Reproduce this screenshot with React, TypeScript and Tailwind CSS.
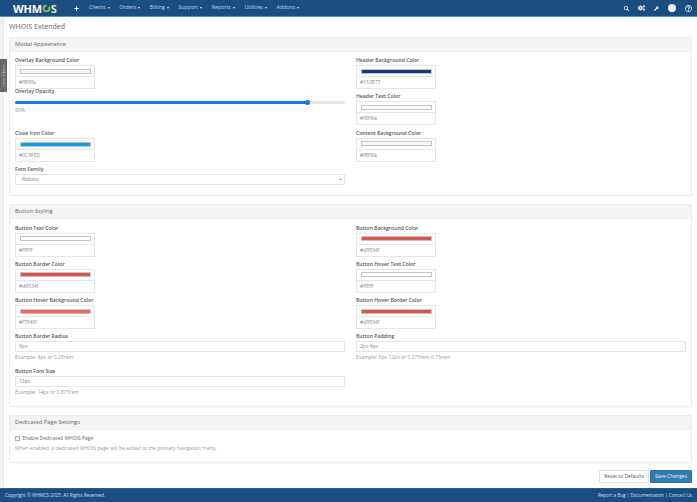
import React from 'react';
import { FaSearch, FaCogs, FaWrench, FaRegQuestionCircle, FaUser, FaPlus, FaChevronDown } from 'react-icons/fa';

const navItems = ['Clients', 'Orders', 'Billing', 'Support', 'Reports', 'Utilities', 'Addons'];

function ColorField({ label, color, value, tight }: { label: string; color: string; value: string; tight?: boolean }) {
  return (
    <div className={tight ? 'h-[31px]' : 'h-[36.33px]'}>
      <label className="block h-[8px] leading-[8px] text-[5.1px] font-semibold text-[#555]">{label}</label>
      <div className="w-[80px] mt-[1px]">
        <div className="h-[12px] border border-[#e6e6e6] px-[3.5px] py-[2.5px]">
          <div className="h-full border border-[#c4c4c4]" style={{ backgroundColor: color }} />
        </div>
        <div className="h-[12px] border-x border-b border-[#e6e6e6] px-[3px] text-[5px] leading-[10px] text-[#888]">{value}</div>
      </div>
    </div>
  );
}

function TextField({ label, value, hint }: { label: string; value: string; hint?: string }) {
  return (
    <div className="h-[34.5px]">
      <label className="block h-[8px] leading-[8px] text-[5.1px] font-semibold text-[#555]">{label}</label>
      <div className="mt-[1px] h-[11px] border border-[#e6e6e6] px-[3px] text-[5px] leading-[9px] text-[#888]">{value}</div>
      {hint && <p className="mt-[2px] text-[5px] leading-[7px] text-[#999]">{hint}</p>}
    </div>
  );
}

function Panel({ title, children, className }: { title: string; children: React.ReactNode; className: string }) {
  return (
    <section className={`border border-[#ececec] rounded-[1px] mb-[8px] ${className}`}>
      <h3 className="h-[13.5px] px-[5px] bg-[#f4f4f4] border-b border-[#eeeeee] text-[5.8px] leading-[13px] font-normal text-[#666]">{title}</h3>
      {children}
    </section>
  );
}

export default function App() {
  return (
    <div className="relative w-[697px] h-[502px] overflow-hidden bg-white flex flex-col font-['Open_Sans',sans-serif]">
      {/* Top nav */}
      <nav className="h-[17px] shrink-0 bg-[#1a4d80] border-b border-[#5f8db5] flex items-center text-white">
        <div className="ml-[13px] w-[46px] flex items-center text-[11px] font-bold tracking-[-0.2px] leading-none">
          <span>WHM</span>
          <svg viewBox="0 0 20 20" className="w-[9px] h-[9px]">
            <circle cx="10" cy="10" r="6.5" fill="none" stroke="#8cc63f" strokeWidth="4" strokeDasharray="30 6" />
          </svg>
          <span className="text-[#d8ecc0]">S</span>
        </div>
        <FaPlus className="ml-[15px] w-[5px] h-[5px]" />
        <div className="ml-[10px] flex items-center gap-[9.5px]">
          {navItems.map((item) => (
            <span key={item} className="flex items-center gap-[2px] text-[5.3px] text-[#c5d5e5]">
              {item}
              <span className="w-0 h-0 border-x-[1.5px] border-t-[2px] border-x-transparent border-t-[#dbe6f0]" />
            </span>
          ))}
        </div>
        <div className="ml-auto mr-[5px] flex items-center gap-[9px]">
          <FaSearch className="w-[5px] h-[5px]" />
          <FaCogs className="w-[7px] h-[6px]" />
          <FaWrench className="w-[5px] h-[5px]" />
          <span className="w-[8px] h-[8px] rounded-full bg-[#e6e6e6] flex items-end justify-center overflow-hidden">
            <FaUser className="w-[6px] h-[6px] text-white" />
          </span>
          <FaRegQuestionCircle className="w-[7px] h-[7px]" />
        </div>
      </nav>

      <div className="flex-1 flex min-h-0">
        <div className="w-[3.5px] shrink-0 bg-[#f2f2f2] border-r border-[#e8e8e8]" />
        <main className="flex-1 pl-[5.5px] pr-[5px]">
          <h1 className="h-[20px] pt-[4px] text-[7.1px] leading-[11px] font-normal text-[#666]">WHOIS Extended</h1>

          <Panel title="Modal Appearance" className="h-[159px]">
            <div className="grid grid-cols-2 gap-x-[11px] px-[5px] pt-[4.5px]">
              <div>
                <ColorField tight label="Overlay Background Color" color="#f8f9fa" value="#f8f9fa" />
                <div className="h-[42px]">
                  <label className="block h-[8px] leading-[8px] text-[5.1px] font-semibold text-[#555]">Overlay Opacity</label>
                  <div className="mt-[5.5px] h-[3px] rounded-full bg-[#e6e6e6] flex items-center">
                    <div className="w-[88.5%] h-full rounded-full bg-[#1a73e8]" />
                    <div className="w-[5px] h-[5px] -ml-[2.5px] rounded-full bg-[#1a73e8]" />
                  </div>
                  <p className="mt-[3.5px] text-[5px] leading-[7px] text-[#888]">90%</p>
                </div>
                <ColorField label="Close Icon Color" color="#0C9FED" value="#0C9FED" />
                <label className="block h-[8px] leading-[8px] text-[5.1px] font-semibold text-[#555]">Font Family</label>
                <div className="mt-[1px] h-[11px] border border-[#e6e6e6] pl-[6px] pr-[2px] flex items-center justify-between text-[5px] text-[#888]">
                  Roboto
                  <FaChevronDown className="w-[3px] h-[3px] text-[#444]" />
                </div>
              </div>
              <div>
                <ColorField label="Header Background Color" color="#153877" value="#153877" />
                <ColorField label="Header Text Color" color="#f8f9fa" value="#f8f9fa" />
                <ColorField label="Content Background Color" color="#f8f9fa" value="#f8f9fa" />
              </div>
            </div>
          </Panel>

          <Panel title="Button Styling" className="h-[203px]">
            <div className="grid grid-cols-2 gap-x-[11px] px-[5px] pt-[5px]">
              <div>
                <ColorField label="Button Text Color" color="#ffffff" value="#ffffff" />
                <ColorField label="Button Border Color" color="#d9534f" value="#d9534f" />
                <ColorField label="Button Hover Background Color" color="#f7645f" value="#f7645f" />
                <TextField label="Button Border Radius" value="6px" hint="Example: 4px or 0.25rem" />
                <TextField label="Button Font Size" value="13px" hint="Example: 14px or 0.875rem" />
              </div>
              <div>
                <ColorField label="Button Background Color" color="#d9534f" value="#d9534f" />
                <ColorField label="Button Hover Text Color" color="#ffffff" value="#ffffff" />
                <ColorField label="Button Hover Border Color" color="#d9534f" value="#d9534f" />
                <TextField label="Button Padding" value="2px 4px" hint="Example: 6px 12px or 0.375rem 0.75rem" />
              </div>
            </div>
          </Panel>

          <Panel title="Dedicated Page Settings" className="h-[48px]">
            <div className="px-[5px] pt-[5px]">
              <label className="flex items-center gap-[3px] h-[8px] text-[5px] text-[#666]">
                <span className="w-[4.5px] h-[4.5px] border border-[#aaa] bg-white" />
                Enable Dedicated WHOIS Page
              </label>
              <p className="mt-[1px] text-[5px] leading-[8px] text-[#999]">When enabled, a dedicated WHOIS page will be added to the primary navigation menu.</p>
            </div>
          </Panel>

          <div className="-mt-[1px] flex justify-end gap-[1px]">
            <button className="w-[50px] h-[13px] border border-[#e0e0e0] rounded-[1px] bg-white text-[5px] text-[#555]">Reset to Defaults</button>
            <button className="w-[42px] h-[13px] border border-[#2e6da4] rounded-[1px] bg-[#337ab7] text-[5px] text-[#e6eef6]">Save Changes</button>
          </div>
        </main>
      </div>

      {/* Footer */}
      <footer className="h-[14px] shrink-0 bg-[#1a4d80] border-t border-[#2a5d90] px-[5px] flex items-center justify-between text-[4.6px] text-[#d5e0ec]">
        <span>Copyright © WHMCS 2025. All Rights Reserved.</span>
        <span>Report a Bug | Documentation | Contact Us</span>
      </footer>

      {/* Sidebar tab sits over the page */}
      <div className="absolute left-0 top-[59px] w-[6.5px] h-[33px] bg-[#666] rounded-r-[1px] flex items-center justify-center">
        <span className="[writing-mode:vertical-rl] rotate-180 text-[3.6px] text-[#ccc] whitespace-nowrap">Open Sidebar</span>
      </div>
    </div>
  );
}
